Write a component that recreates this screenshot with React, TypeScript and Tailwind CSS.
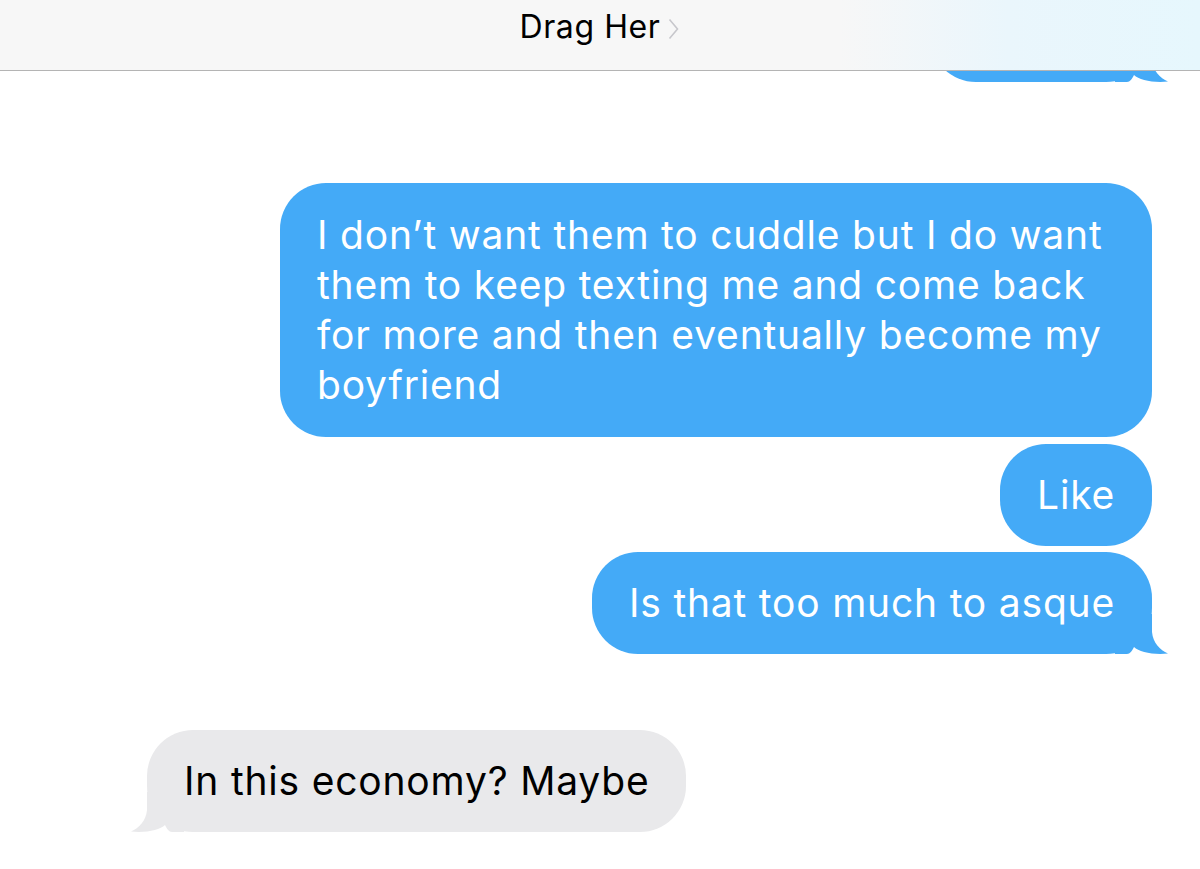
import React from 'react';

const BLUE = '#44aaf7';
const GRAY = '#e9e9eb';

function Tail({ color, flip }: { color: string; flip?: boolean }) {
  return (
    <svg
      width="53"
      height="40"
      viewBox="0 0 53 40"
      className={flip ? 'absolute bottom-0 left-[-16px] -scale-x-100' : 'absolute bottom-0 right-[-16px]'}
    >
      <path
        d="M0 40 L12 40 C15 40 17 37 19 33 C24 38 38 41 53 39.5 C45 36 38 29 37 18 L37 0 L0 0 Z"
        fill={color}
      />
    </svg>
  );
}

function Bubble({
  children,
  mine = true,
  tail = false,
  className = '',
}: {
  children?: React.ReactNode;
  mine?: boolean;
  tail?: boolean;
  className?: string;
}) {
  return (
    <div
      className={
        'relative rounded-[46px] px-[37px] py-[26px] text-[39px] leading-[50px] tracking-[0.8px] ' +
        (mine ? 'bg-[#44aaf7] text-white ' : 'bg-[#e9e9eb] text-black ') +
        className
      }
    >
      {children}
      {tail && <Tail color={mine ? BLUE : GRAY} flip={!mine} />}
    </div>
  );
}

export default function App() {
  return (
    <div
      className="relative w-[1200px] h-[869px] overflow-hidden bg-white"
      style={{ fontFamily: 'Inter, "Noto Sans", sans-serif' }}
    >
      <div className="relative z-10 h-[71px] border-b border-[#b4b4b4] bg-[linear-gradient(to_right,#f7f7f7_0%,#f7f7f7_70%,#eaf6fc_84%,#e6f7fd_100%)] flex items-start justify-center pt-[7px]">
        <div className="flex items-center gap-[7px] ml-[-2px]">
          <span className="text-[32px] leading-[40px] text-black tracking-[0.6px]">Drag Her</span>
          <svg width="11" height="22" viewBox="0 0 11 22" className="mt-[3px]">
            <path d="M1.5 1.5 L9.5 11 L1.5 20.5" fill="none" stroke="#c7c7cc" strokeWidth="1.6" />
          </svg>
        </div>
      </div>

      <div className="flex flex-col items-end pr-[48px]">
        <Bubble tail className="w-[222px] h-[100px] mt-[-89px]" />

        <Bubble className="w-[872px] mt-[101px] py-[27px]">
          I don’t want them to cuddle but I do want them to keep texting me and come back for more and then eventually become my boyfriend
        </Bubble>
        <Bubble className="mt-[7px]">Like</Bubble>
        <Bubble tail className="mt-[6px]">Is that too much to asque</Bubble>

        <div className="self-start ml-[147px] mt-[76px]">
          <Bubble mine={false} tail>
            In this economy? Maybe
          </Bubble>
        </div>
      </div>
    </div>
  );
}
